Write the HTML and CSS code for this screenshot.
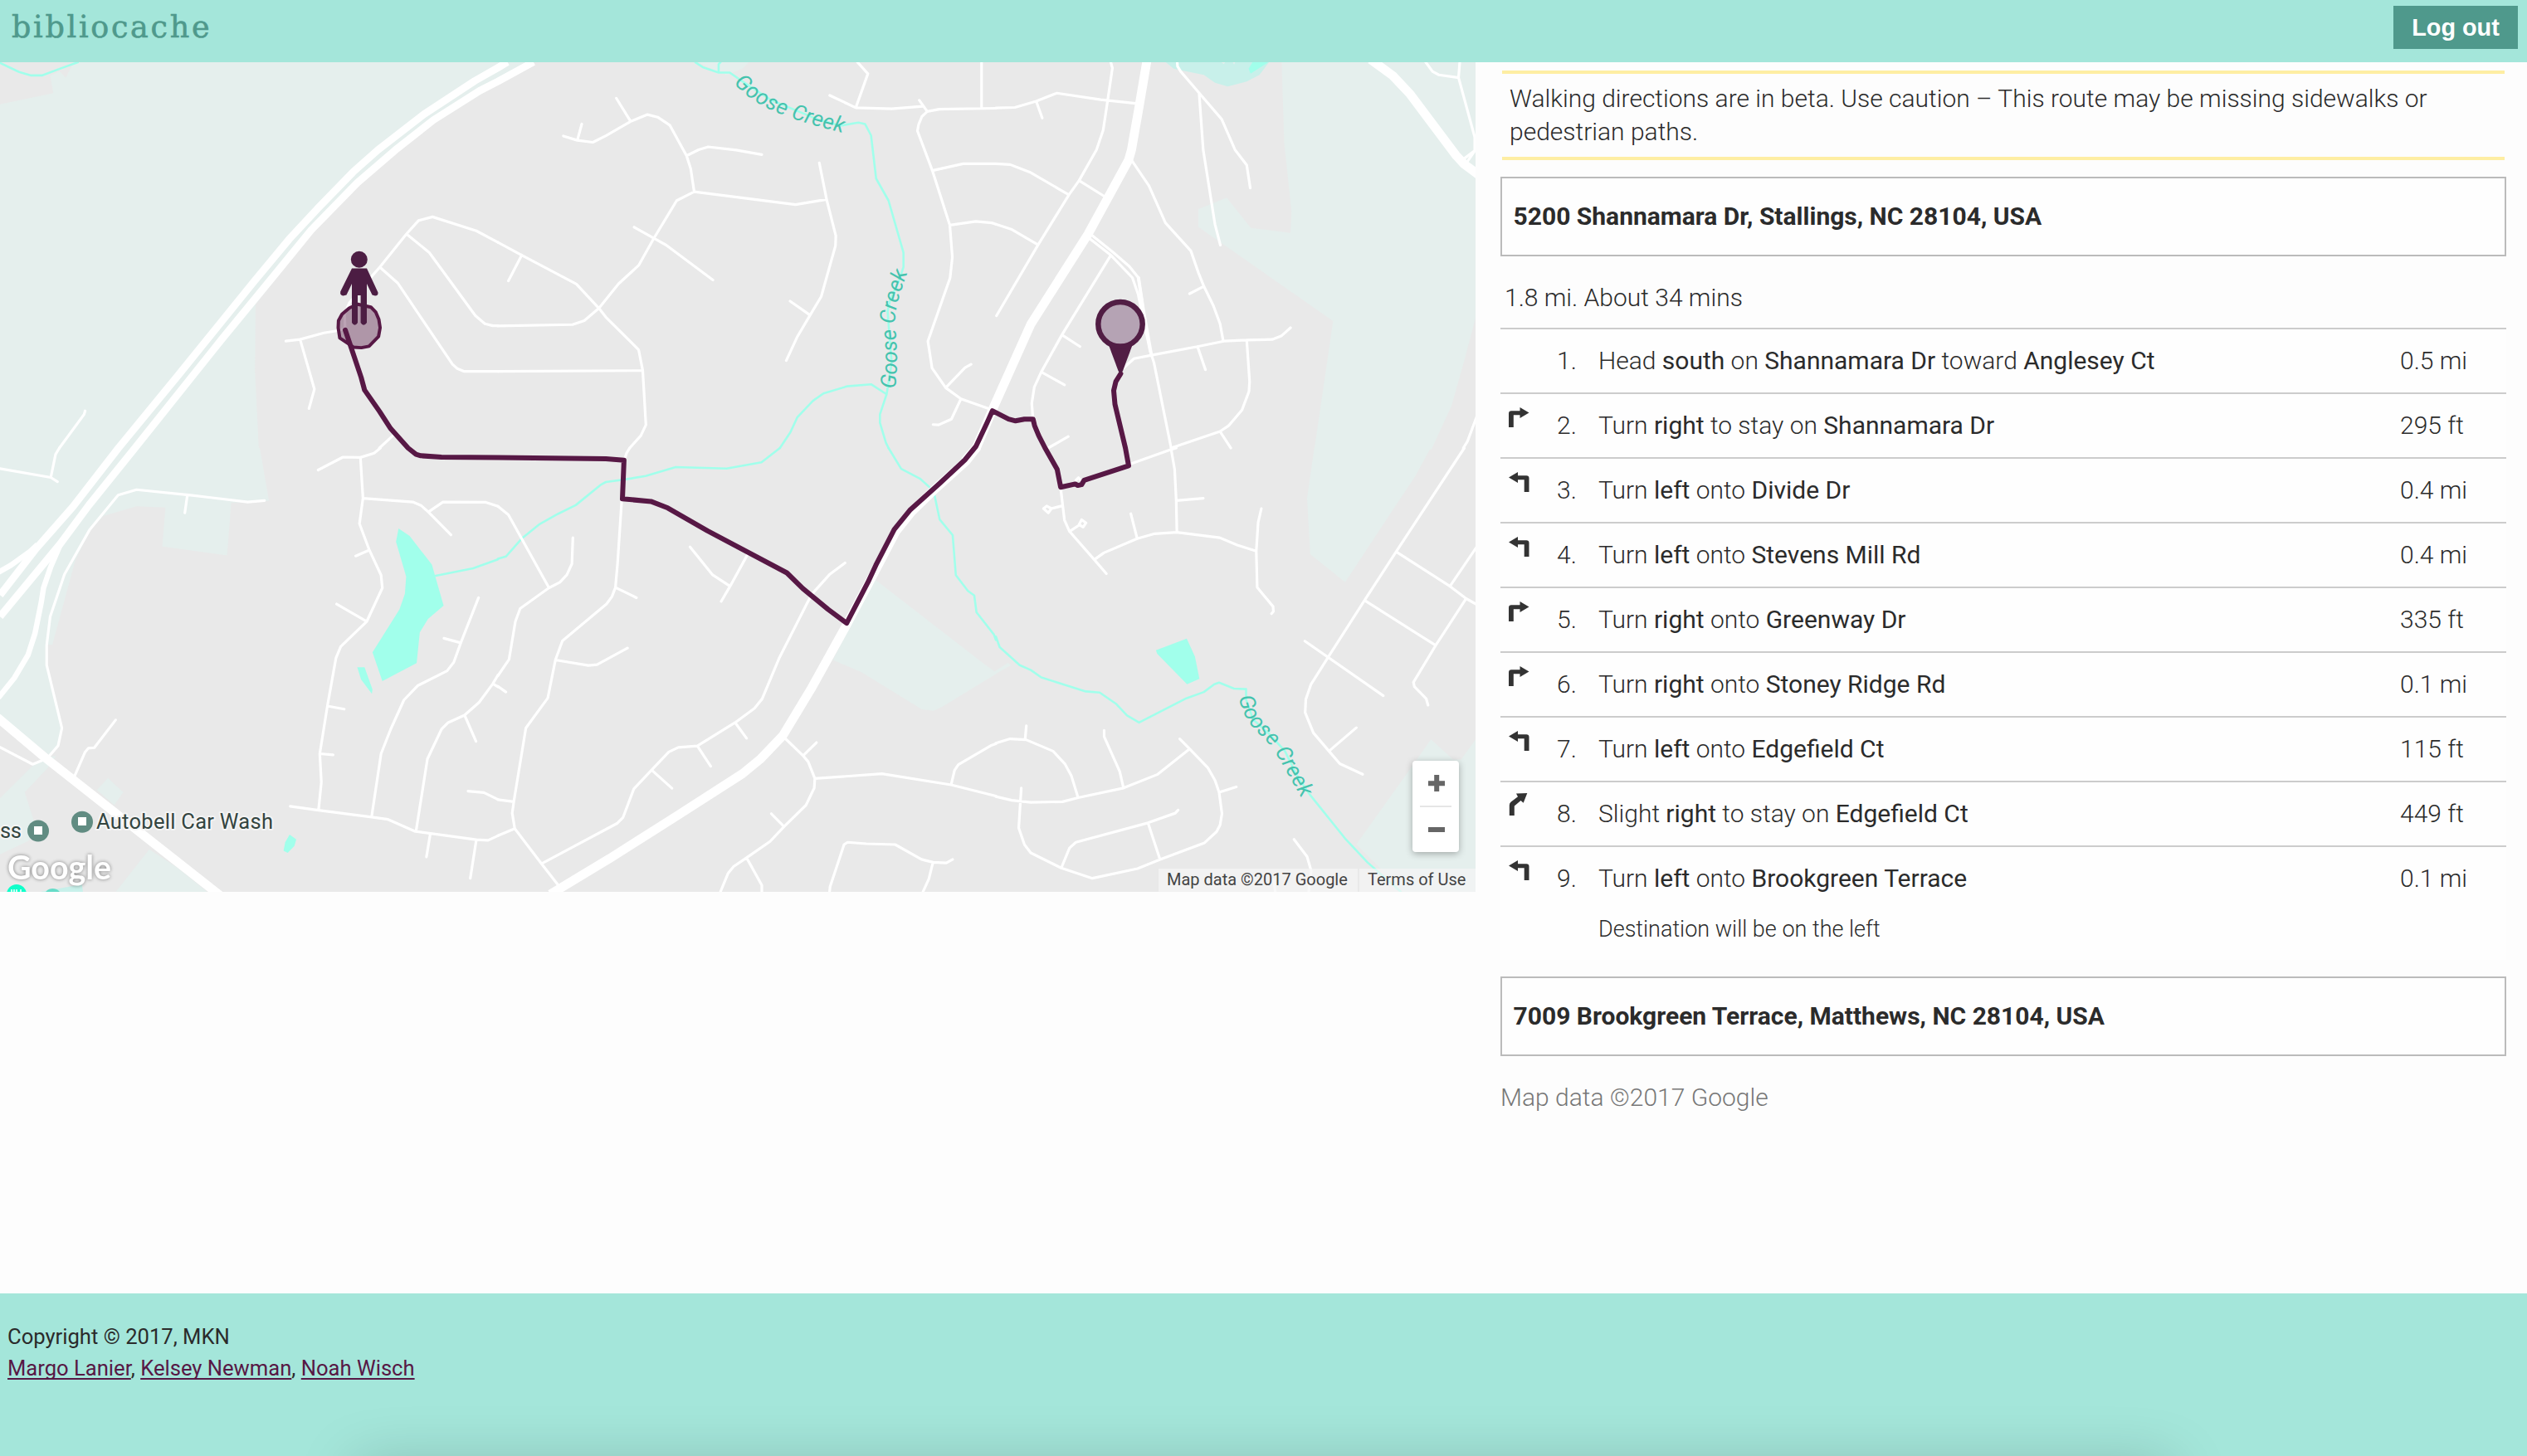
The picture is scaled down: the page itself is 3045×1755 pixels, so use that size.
FILE: index.html
```html
<!DOCTYPE html>
<html lang="en">
<head>
<meta charset="utf-8">
<title>bibliocache</title>
<link rel="stylesheet" href="styles.css">
</head>
<body>
<svg width="0" height="0" class="sprites" aria-hidden="true">
  <symbol id="turn-right" viewBox="0 0 25 24"><path d="M0 24V7.5Q0 4.3 3.2 4.3H13.5V0L24.5 6.5L13.5 13V9.2H5.8V24z"/></symbol>
  <symbol id="turn-left" viewBox="0 0 25 24"><path d="M24.5 24V7.5Q24.5 4.3 21.3 4.3H11V0L0 6.5L11 13V9.2H18.7V24z"/></symbol>
  <symbol id="slight-right" viewBox="0 0 25 27"><path d="M.8 27V14.500Q.8 12 2.800 10.500L11 4.200L9 .6L22.300 0L17.700 11.700L14.500 9L6.800 15.500V27z"/></symbol>
</svg>

<header class="topbar">
  <a class="logo">bibliocache</a>
  <button class="logout">Log out</button>
</header>

<main class="content">
  <section class="map">
    <svg class="map-canvas" viewBox="0 75 1778 1000" width="1778" height="1000">
      <defs>
        <path id="creek-a" d="M884 100C902 120 925 132 947 140S990 154 1027 163"/>
        <path id="creek-b" d="M1079 469C1082 440 1081 415 1079 395S1083 357 1096 322"/>
        <path id="creek-c" d="M1493 840C1498 873 1519 884 1530 898S1553 936 1574 972"/>
      </defs>

      <!-- land cover and lakes, one group per tile -->
      <g class="areas">
        <g transform="scale(.38265 .34439)">
          <path d="M0 365L168 326L158 265L188 250L207 272L232 218H1580V285L1370 430L1250 530L1130 650L980 815L880 960L805 1065L803 1300L815 1572H0z"/>
        </g>
        <g transform="translate(600) scale(.38265 .34439)">
          <path d="M0 285V218H110zM630 218H790L770 240L720 262L690 250z"/>
        </g>
        <g transform="translate(1200) scale(.38265 .34439)">
          <path d="M900 218L908 500L931 740L928 815L803 798L727 692L638 732V795L720 858L1062 1124L1003 1572H1372L1435 1420L1478 1250L1511 1110V218z"/>
          <path class="park" d="M535 218L560 240L600 250L655 262L690 290L730 303L790 285L830 262L860 218z"/>
          <path class="lake" d="M808 218L796 240L802 258L858 218z"/>
          <path class="dots" d="M710 218h12l-4 6zM746 218h8l-4 8z"/>
        </g>
        <g transform="translate(0 540) scale(.38265 .34439)">
          <path d="M0 0H818L847 185L728 192L715 376L511 345L521 208L430 204L325 238L283 290L238 390L165 688H147V760L195 980L180 1045L155 1075L0 935z"/>
          <path d="M100 1115L150 1080L177 1078L150 1120L78 1205L115 1335L90 1375L0 1422V1225zM340 1155L388 1205L360 1250L305 1197zM365 1553L470 1405L560 1470L660 1560z"/>
          <path class="lake" d="M1255 282L1290 308L1360 408L1397 552L1348 598L1322 645L1312 753L1204 816L1173 715L1258 565L1275 510L1279 450L1247 328zM1125 767H1148L1173 845L1171 860L1137 810zM912 1353L933 1370L927 1393L906 1417L893 1410L898 1380z"/>
          <path class="park" d="M130 1553L258 1527L262 1560H130z"/>
        </g>
        <g transform="translate(600 540) scale(.38265 .34439)">
          <path d="M1185 458L1530 755L1572 788L1400 905L1372 920L1335 915L1145 785L1055 742z"/>
        </g>
        <g transform="translate(1200 540) scale(.38265 .34439)">
          <path d="M1003 -2H1370L1320 100L1245 225L1100 470L990 372L980 175zM1135 1387L1310 1115L1370 1020L1440 1090H1465L1511 1020V1560H1290L1210 1470zM-4 782L38 752L48 760L-4 793z"/>
          <path class="lake" d="M504 708L601 667L627 730L641 808L602 827L508 720z"/>
        </g>
      </g>

      <!-- streams -->
      <g class="streams">
        <g transform="scale(.38265 .34439)"><path d="M0 220L60 252L98 264H132L190 240L245 218"/></g>
        <g transform="translate(600) scale(.38265 .34439)">
          <path d="M622 218L645 235L695 254H730L770 285L860 350L1000 415L1078 440L1135 429L1156 434L1175 474L1191 625L1230 702L1277 884V935L1262 985L1235 1050L1227 1090L1240 1270L1224 1380L1203 1450V1480L1222 1550L1230 1568M695 254V225L703 215M1224 1380L1175 1345L1100 1352L1025 1377L992 1403L943 1460L921 1513L888 1568"/>
        </g>
        <g transform="translate(0 540) scale(.38265 .34439)"><path d="M1372 447L1490 421L1568 390"/></g>
        <g transform="translate(600 540) scale(.38265 .34439)">
          <path d="M0 388L25 380L77 315L132 266L190 230L245 200L325 128L340 119L400 110L465 98L560 67L720 72L830 50L888 0M1230 0L1270 73L1330 108L1372 150L1391 250L1432 305L1442 445L1480 500L1500 516L1507 575L1562 653L1568 672"/>
        </g>
        <g transform="translate(1200 540) scale(.38265 .34439)">
          <path d="M0 660L12 697L75 760L110 777L143 803L283 852L327 856L378 895L413 936L451 961L600 876L655 854L688 827L703 821L750 842L788 844V880L810 950L860 1000L910 1060L950 1150L990 1215L1100 1367L1170 1450L1275 1553"/>
        </g>
      </g>

      <!-- local streets -->
      <g class="streets">
        <g transform="scale(.38265 .34439)">
          <path d="M900 1194L945 1188L1020 1165L1065 1157L1087 1150L1085 1100L1100 1060L1170 968L1196 935L1280 819L1318 772L1362 759L1500 808L1568 848M945 1188L990 1362L973 1430M1280 819L1352 884L1497 1105L1527 1133L1552 1140H1568M1196 935L1252 990L1425 1275L1440 1290L1462 1300H1568M268 1438L265 1450L187 1568M1240 1522L1195 1568"/>
        </g>
        <g transform="translate(600) scale(.38265 .34439)">
          <path d="M0 848L75 893L247 994L318 1079L340 1110L443 1224L456 1297L466 1487L450 1525L415 1568M75 893L33 983M0 1141L235 1136L272 1122L318 1079L380 993L443 929L491 834L563 702L618 671L937 716L1035 698M0 1300L456 1297M206 476L250 491L299 498L340 475L418 425L471 401L503 410L541 438L594 545L607 590L618 671M264 434L250 491M373 344L418 425M594 545L632 524L662 514L750 525L831 541M429 795L491 834L530 858L677 980M1012 570L1035 698L1064 825L1063 860L1018 1038L983 1103L943 1178L908 1262M920 1054L983 1103"/>
          <path d="M1130 215L1165 258L1127 377M1045 334L1127 377L1240 381L1338 372M1327 351L1352 390M1568 379L1390 382L1352 390L1335 408L1325 435L1321 458L1368 597L1423 788L1431 900L1424 972L1354 1194L1367 1288L1410 1357L1458 1396L1545 1430M1523 215V379M1368 597L1465 573H1568M1423 788L1505 775L1555 780L1568 785M1410 1357L1471 1287L1490 1275M1458 1396L1428 1467L1388 1487L1370 1486"/>
        </g>
        <g transform="translate(1200) scale(.38265 .34439)">
          <path d="M362 218L367 238L352 352L338 455L317 524L262 632L230 682L133 857L2 1105M0 378L60 376L127 354L192 326L330 349L440 362M127 354L146 413M0 573L45 576L110 604L230 682M262 632L340 686M0 785L48 802L133 857M427 560L482 650L534 780L614 878L638 955L655 1002L685 1070L706 1133L716 1193M610 1028L655 1002M290 812L368 882L420 932L449 972L465 1090L485 1225L498 1270L552 1568M285 826L362 893L430 972L448 1030L485 1225M362 893L208 1172L143 1302L121 1355L113 1412L117 1465L150 1550M208 1172L265 1213M143 1302L216 1347"/>
          <path d="M400 1290L435 1255L490 1243L635 1213L718 1194L790 1190L870 1188L900 1175L928 1147M635 1213L660 1294M790 1190L799 1335L797 1370L775 1435L733 1490L706 1510L552 1568M706 1510L740 1568M165 1568L228 1528M571 215L572 232L582 250L640 325L711 417L753 524L790 578L801 658M640 325L653 525L690 785L707 858M1352 215L1375 250L1395 262L1457 272M1461 215L1457 272L1508 480V527L1475 555M1513 520L1485 565M1513 1462L1485 1545L1472 1568"/>
          <path class="wide" d="M449 972L465 1090L490 1245"/>
        </g>
        <g transform="translate(0 540) scale(.38265 .34439)">
          <path d="M833 184L780 189L600 165L430 146L372 165L283 285L203 442L158 590L147 690V760L195 980L183 1042L155 1078L130 1095L103 1107L0 1047M590 165L582 227M0 72L160 103L181 118M160 103L175 22L187 0M364 952L297 1049L278 1051L268 1064L235 1148"/>
          <path d="M1198 0L1178 18L1135 33L1080 32L1002 77M1135 33L1143 176L1132 265L1163 357L1200 445L1204 490L1155 607L1073 695L1058 735L1031 903L1007 1070L1012 1170L1003 1268M1143 176L1300 189L1327 202L1349 224L1420 304M1349 224L1395 189L1530 190L1568 204M1120 378L1163 357M1060 546L1155 607M1031 903L1084 914M1007 1070L1049 1074M914 1254L1003 1268L1170 1292L1222 1300L1308 1342L1500 1371L1537 1373L1568 1357M1507 524L1451 682L1429 750L1408 780L1315 832L1272 882L1230 985L1200 1070L1170 1292M1398 666L1451 682M1568 795L1552 825L1509 890L1463 935L1410 962L1391 983L1346 1088L1310 1342M1552 825L1568 836M1463 935L1499 1027M1474 1201L1524 1206L1568 1230M1355 1350L1343 1431M1500 1371L1481 1506"/>
        </g>
        <g transform="translate(600 540) scale(.38265 .34439)">
          <path d="M415 0L405 18L400 35M390 180L377 400L370 488L359 520L342 546L203 675L181 742L157 875L88 980L50 1238L45 1278L53 1332L137 1455L190 1530M370 488L436 524M181 742L285 761L312 758L408 700M0 204L33 234L160 488M236 314L233 405L217 444L195 470L160 490L70 562L55 607L35 740L0 797M0 834L25 854M0 1231L50 1238M0 1357L53 1332M605 346L675 443L731 484M785 375L731 484L703 537M1093 402L1044 443L990 510L975 540L885 737L832 878L808 911L747 961L628 1043L568 1048L538 1064L484 1127L428 1193L394 1293L375 1314L137 1455M747 961L783 1016M628 1043L670 1114M484 1127L548 1191"/>
          <path d="M905 1017L961 1077L977 1098L998 1157L996 1190L970 1250L901 1325L857 1377L783 1434L742 1465L725 1488L700 1555M961 1077L1003 1031M998 1157L1209 1140L1427 1179L1568 1218M861 1280L901 1325M783 1434L831 1530V1555M1427 1179L1438 1128L1450 1108L1555 1040L1568 1035M1044 1557L1046 1535L1090 1388L1101 1380L1160 1385L1251 1388L1334 1440L1370 1450L1412 1452L1432 1440M1370 1450L1357 1508L1337 1557"/>
        </g>
        <g transform="translate(1200 540) scale(.38265 .34439)">
          <path d="M204 140L216 252L232 292L310 391L348 440M150 212L160 203L175 212L165 227zM175 212L207 203M270 251L284 262L275 277L262 268zM232 292L262 270M252 113L260 104L268 113M418 58L552 5L568 0M552 5L563 75L568 184L570 295M568 184L653 176M310 391L340 367L445 317L500 300L570 295L705 314L760 340L820 361M425 230L445 317M836 212L826 260L820 361L823 488L873 555L874 572L868 580"/>
          <path d="M1475 0L1265 355L1161 533L1046 733L992 828L976 880L974 926L1000 997L1049 1061L1083 1105L1155 1142M1049 1061L1135 979M1265 366L1430 484L1481 527L1513 547M1430 484L1513 348M1481 527L1385 691L1315 820L1318 835L1355 877L1361 900M1161 533L1385 691M973 676L1220 867"/>
          <path d="M0 1033L45 1018L95 1021L180 1061L217 1105L238 1148L259 1224M96 972L92 1021M0 1220L50 1233L110 1240L210 1238L259 1224L402 1190L508 1143L610 1053M579 1018L610 1053L668 1120L690 1163L703 1205L712 1280L706 1320L695 1343L657 1382L517 1440L446 1472L304 1506L206 1470L110 1417L90 1388L72 1330L80 1190M703 1205L757 1186M341 988V1010L390 1132L402 1190M574 1267L565 1278L479 1312L252 1380L232 1400L206 1470M479 1312L517 1440M939 1370L980 1430L993 1480L985 1555M875 1510L880 1555"/>
        </g>
      </g>

      <!-- highways -->
      <g class="highways">
        <g transform="scale(.38265 .34439)">
          <path class="lane" d="M1598 217L1568 237L1495 283L1335 400L1190 525L1112 602L1000 730L910 838L800 985L560 1315L373 1568L230 1773L110 1925L0 2083M1680 217L1568 285L1510 318L1365 420L1245 525L1125 640L980 805L870 955L700 1185L425 1568L280 1768L190 1903L0 2158"/>
        </g>
        <g transform="translate(0 540) scale(.38265 .34439)">
          <path class="ramp" d="M118 338L95 362L35 410L-5 435M195 325L160 415L137 490L130 540L110 650L88 725L45 805L-5 874"/>
          <path d="M-8 943L140 1082L694 1567"/>
        </g>
        <g transform="translate(1200) scale(.38265 .34439)">
          <path d="M476 210L450 380L427 525L418 560L290 820L110 1135L-5 1420L-62 1568L-98 1613"/>
          <path d="M1180 208L1250 265L1305 330L1450 545L1475 575L1520 612"/>
        </g>
        <g transform="translate(600 540) scale(.38265 .34439)">
          <path d="M1510 -5L1475 45L1380 140L1302 224L1253 292L1167 475L1095 625L985 845L897 1007L825 1090L770 1140L560 1290L350 1438L165 1562"/>
        </g>
      </g>

      <!-- labels drawn on the creek -->
      <g class="creek-labels">
        <text textLength="147"><textPath href="#creek-a">Goose Creek</textPath></text>
        <text textLength="143"><textPath href="#creek-b">Goose Creek</textPath></text>
        <text textLength="145"><textPath href="#creek-c">Goose Creek</textPath></text>
      </g>

      <!-- walking route with start radius, person and destination pin -->
      <path class="radius" transform="scale(.38265 .34439)" d="M1127 1065L1168 1075L1183 1092L1193 1118L1197 1147L1192 1178L1162 1212L1138 1217L1113 1215L1070 1183L1065 1147L1066 1122L1077 1100L1100 1078z"/>
      <path class="route" d="M416 397.8L435.1 454.6L439.3 470.1L457.3 495.9L470.7 516.6L491.7 540L501.3 547.6L507 549.3L531.9 551L600 551.4L730.1 553.1L751.9 554.8L750 601.3L784.4 604.4L804.7 612.3L852.6 639.9L948.2 690.5L967.4 709.4L998 734.6L1020.2 751.1L1045.8 701.9L1055.4 681.2L1077.6 638.1L1096.3 615.1L1131.9 583L1162.5 554.5L1176 538L1189.3 509.7L1195.8 495.2L1215.3 505.2L1223.7 507.3L1234.4 505.2H1244.8L1246.7 513.1L1251.7 525.2L1259.3 540L1273.9 565.8L1278.1 587.2L1295.7 583.4L1298.7 585.1L1303.3 584.1L1306.4 578.9L1360 561.4L1356.1 540L1343.5 487.3L1342 470.8L1344.6 459.8L1350.4 450.5"/>
      <g class="person">
        <circle cx="432.8" cy="312.8" r="10"/>
        <path d="M424 323.5H442L455.5 352.5Q456 356.5 452 356.5L448.5 355.5L442 342V389Q438 394.5 434.6 389V356H431V389Q427.500 394.5 424 389V342L417.500 355.5L413.500 356.500Q409.500 356 410.200 351.500z"/>
      </g>
      <g class="pin">
        <path d="M1336 416H1364.500L1353 447Q1350 452 1347.500 447z"/>
        <circle cx="1350" cy="390.800" r="26.700"/>
      </g>

      <!-- places -->
      <g class="place-dot"><circle cx="99" cy="990.800" r="13"/><path d="M94 985h10v10h-10z"/></g>
      <g class="place-dot"><circle cx="46" cy="1001.500" r="13"/><path d="M41 996h10v10h-10z"/></g>
      <text class="place" x="116" y="998.700" textLength="213">Autobell Car Wash</text>
      <text class="place" x="0" y="1009.500" textLength="26">ss</text>
      <circle class="place-green" cx="20" cy="1078" r="12"/>
      <path class="place-fork" d="M14 1072v3M17 1072v3M20 1072v3M25 1072v3"/>
      <circle class="place-park" cx="63.500" cy="1082" r="11"/>
      <text class="google" x="9" y="1060" textLength="125" lengthAdjust="spacingAndGlyphs">Google</text>
    </svg>
    <div class="zoom">
      <button class="zoom-btn" aria-label="Zoom in"><svg width="20" height="20"><path d="M7.200 0h6v7.200H20v6h-6.800V20h-6v-6.800H0v-6h7.200z"/></svg></button>
      <span class="zoom-rule"></span>
      <button class="zoom-btn" aria-label="Zoom out"><svg width="20" height="20"><path d="M0 7h20v6H0z"/></svg></button>
    </div>
    <div class="legal"><span>Map data ©2017 Google</span><span class="terms">Terms of Use</span></div>
  </section>

  <section class="directions">
    <p class="warning">Walking directions are in beta. Use caution – This route may be missing sidewalks or pedestrian paths.</p>
    <div class="place-box">5200 Shannamara Dr, Stallings, NC 28104, USA</div>
    <p class="summary">1.8 mi. About 34 mins</p>
    <div class="steps">
      <div class="step"><span class="icon"></span><span>1.</span><span>Head <b>south</b> on <b>Shannamara Dr</b> toward <b>Anglesey Ct</b></span><span>0.5 mi</span></div>
      <div class="step"><svg class="icon"><use href="#turn-right"/></svg><span>2.</span><span>Turn <b>right</b> to stay on <b>Shannamara Dr</b></span><span>295 ft</span></div>
      <div class="step"><svg class="icon"><use href="#turn-left"/></svg><span>3.</span><span>Turn <b>left</b> onto <b>Divide Dr</b></span><span>0.4 mi</span></div>
      <div class="step"><svg class="icon"><use href="#turn-left"/></svg><span>4.</span><span>Turn <b>left</b> onto <b>Stevens Mill Rd</b></span><span>0.4 mi</span></div>
      <div class="step"><svg class="icon"><use href="#turn-right"/></svg><span>5.</span><span>Turn <b>right</b> onto <b>Greenway Dr</b></span><span>335 ft</span></div>
      <div class="step"><svg class="icon"><use href="#turn-right"/></svg><span>6.</span><span>Turn <b>right</b> onto <b>Stoney Ridge Rd</b></span><span>0.1 mi</span></div>
      <div class="step"><svg class="icon"><use href="#turn-left"/></svg><span>7.</span><span>Turn <b>left</b> onto <b>Edgefield Ct</b></span><span>115 ft</span></div>
      <div class="step"><svg class="icon icon-slight"><use href="#slight-right"/></svg><span>8.</span><span>Slight <b>right</b> to stay on <b>Edgefield Ct</b></span><span>449 ft</span></div>
      <div class="step last"><svg class="icon"><use href="#turn-left"/></svg><span>9.</span><span>Turn <b>left</b> onto <b>Brookgreen Terrace</b><small>Destination will be on the left</small></span><span>0.1 mi</span></div>
    </div>
    <div class="place-box">7009 Brookgreen Terrace, Matthews, NC 28104, USA</div>
    <p class="credit">Map data ©2017 Google</p>
  </section>
</main>

<footer class="footer">
  <p>Copyright © 2017, MKN</p>
  <p><a href="#">Margo Lanier</a>, <a href="#">Kelsey Newman</a>, <a href="#">Noah Wisch</a></p>
</footer>
</body>
</html>
```

FILE: styles.css
```css
* { box-sizing: border-box; }

body {
  margin: 0;
  height: 1755px;
  display: flex;
  flex-direction: column;
  overflow: hidden;
  background: #fdfdfd;
  color: #2b2b2b;
  font-family: Roboto, sans-serif;
}

p { margin: 0; }
button { border: 0; padding: 0; }
.sprites { position: absolute; }

/* header */
.topbar {
  height: 75px;
  flex: none;
  display: flex;
  justify-content: space-between;
  align-items: flex-start;
  padding: 7px 11px 0 14px;
  background: #a4e6da;
}
.logo {
  color: #4f998c;
  font: 36.5px/51px "DejaVu Serif", serif;
  letter-spacing: 2.7px;
  -webkit-text-stroke: .6px #4f998c;
}
.logout {
  width: 150px;
  height: 52px;
  background: #4f998c;
  color: #fff;
  font: bold 28.8px "Liberation Sans", sans-serif;
}

/* main */
.content { display: flex; height: 1484px; flex: none; }
.map {
  position: relative;
  width: 1778px;
  height: 1000px;
  flex: none;
  overflow: hidden;
  background: #e9e9e9;
}
.map-canvas { display: block; }
.map-canvas path { vector-effect: non-scaling-stroke; }
.areas path { fill: #e5efed; }
.areas .park { fill: #c8f0ea; }
.areas .lake { fill: #a1ffeb; }
.areas .dots { fill: #e5efed; }
.streams path, .streets path, .highways path {
  fill: none;
  stroke: #fff;
  stroke-width: 3.2px;
  stroke-linecap: round;
  stroke-linejoin: round;
}
.streams path { stroke: #a1ffeb; stroke-width: 2.6px; }
.streets .wide { stroke-width: 4px; }
.highways path { stroke-width: 10.8px; stroke-linecap: butt; }
.highways .lane { stroke-width: 8.8px; }
.highways .ramp { stroke-width: 6.5px; }
.creek-labels text { font: italic 26px Roboto, sans-serif; fill: #45c3ae; }
.route { fill: none; stroke: #571845; stroke-width: 6px; stroke-linejoin: round; stroke-linecap: round; }
.radius { fill: #571845; fill-opacity: .4; stroke: #571845; stroke-width: 4px; stroke-linejoin: round; }
.person { fill: #4c1d43; }
.pin path { fill: #511d44; }
.pin circle { fill: #b5a3b4; stroke: #511d44; stroke-width: 6.5px; }
.place-dot circle { fill: #618c82; }
.place-dot path { fill: #fff; }
.place {
  font: 25.5px Roboto, sans-serif;
  fill: #33443f;
  stroke: #f4f4f4;
  stroke-width: 4px;
  stroke-linejoin: round;
  paint-order: stroke;
}
.place-green { fill: #10ffca; }
.place-fork { stroke: #fff; stroke-width: 1.5px; }
.place-park { fill: #66dcc8; }
.google {
  font: bold 41px Lato, sans-serif;
  fill: #fff;
  filter: drop-shadow(0 0 2px rgba(0, 0, 0, .45));
}

.zoom {
  position: absolute;
  right: 20px;
  bottom: 48px;
  width: 56px;
  height: 110px;
  display: flex;
  flex-direction: column;
  align-items: center;
  background: #fff;
  border-radius: 4px;
  box-shadow: 0 2px 8px rgba(0, 0, 0, .3);
}
.zoom-btn { flex: 1; width: 56px; padding-left: 1px; display: grid; place-items: center; background: none; fill: #666; }
.zoom-rule { width: 38px; height: 2px; background: #e6e6e6; }

.legal {
  position: absolute;
  right: 0;
  bottom: 0;
  display: flex;
  gap: 2px;
  color: #444;
  font-size: 20px;
  line-height: 27px;
  white-space: nowrap;
}
.legal span { width: 240px; height: 28px; padding-left: 10px; background: rgba(245, 245, 245, .7); }
.legal .terms { width: 140px; }

/* directions */
.directions { width: 1212px; margin-left: 30px; font-size: 30px; font-weight: 300; }
.warning {
  margin: 10px 2px 0;
  height: 108px;
  padding: 10px 9px 0;
  border: solid #feeea3;
  border-width: 4px 0;
  line-height: 40px;
}
.place-box {
  height: 96px;
  margin-top: 20px;
  padding-left: 13.5px;
  border: 2px solid #bbb;
  background: #fefefe;
  font-weight: 700;
  line-height: 92px;
}
.summary { height: 86px; padding: 30px 0 0 5px; line-height: 40px; }
.steps { background: #fefefe; }
.step {
  display: grid;
  grid-template-columns: 58px 50px 966px 1fr;
  height: 78px;
  padding-left: 10px;
  border-top: 2px solid #ccc;
  line-height: 76px;
}
.step b { font-weight: 400; }
.icon { width: 25px; height: 24px; margin-top: 16px; fill: #333; }
.icon-slight { height: 27px; margin-top: 13px; }
.last { height: 138px; }
.last small { display: block; margin-top: -15px; font-size: 27px; }
.credit { padding-top: 30px; color: #777; line-height: 40px; }

/* footer */
.footer {
  position: relative;
  flex: 1;
  padding: 33px 9px 0;
  overflow: hidden;
  background: #a4e6da;
  font-size: 25.6px;
  line-height: 38px;
}
.footer a { color: #571845; text-decoration: underline 2px; text-decoration-skip-ink: none; text-underline-offset: 3px; }
.footer::after {
  content: "";
  position: absolute;
  left: 430px;
  right: 430px;
  top: 210px;
  height: 40px;
  box-shadow: 0 0 70px rgba(0, 0, 0, .25);
}
```
